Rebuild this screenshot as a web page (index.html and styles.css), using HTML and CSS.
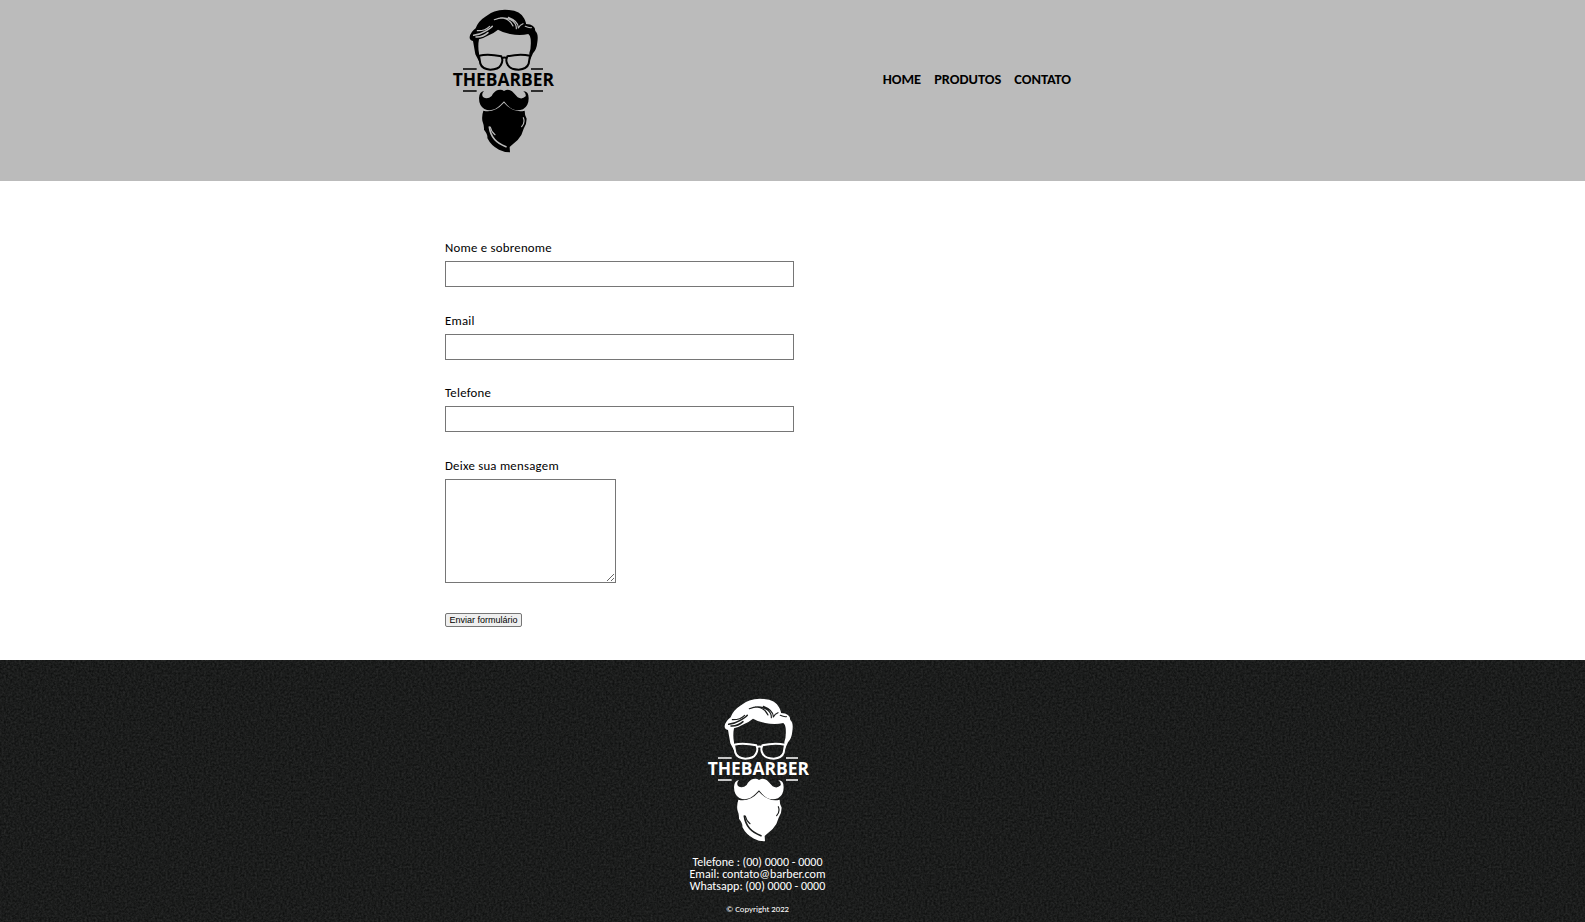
FILE: index.html
```html
<!DOCTYPE html>
<html lang="pt-br">
<head>
<meta charset="UTF-8">
<title>Contato - The Barber</title>
<link rel="stylesheet" href="styles.css">
</head>
<body>
<header class="header">
  <div class="container header-row">
    <h1 class="brand">
      <svg class="logo" viewBox="0 0 375 480" role="img" aria-label="The Barber">
        <g id="logo">
          <path fill="currentColor" d="M106 160L99 120Q88 118 89 108Q91 94 107 82Q115 60 138 46Q164 23 207 27Q241 29 253 53Q259 67 258 69Q286 70 286 90Q296 98 292 124Q290 146 279 157L269 179L268 156Q274 142 272 114Q271 103 265 99Q240 105 210 99Q189 95 174 86Q160 98 143 104Q127 113 117 115Q113 135 117 157L117 181Z"/>
          <g class="cut" fill="none" stroke-linecap="round">
            <path stroke-width="4.5" d="M101 103Q119 101 134 92Q151 83 157 76M108 108Q129 109 144 95"/>
            <path stroke-width="3.5" d="M112 89Q135 90 149 76M163 56Q194 43 218 60Q230 70 229 83M181 51Q208 51 219 75M205 49Q236 61 235 81M236 80Q239 72 249 68M256 76Q266 81 274 80"/>
          </g>
          <g fill="none" stroke="currentColor" stroke-width="6">
            <path d="M117 164Q145 157 184 166Q191 180 182 193Q175 206 151 206Q126 204 121 188ZM270 164Q239 157 202 166Q195 180 204 193Q212 206 236 206Q261 204 266 188Z"/>
            <path d="M185 172Q193 167 202 172"/>
            <path stroke-width="4" d="M69 204H110M273 204H309M69 270H110M273 270H309"/>
          </g>
          <text class="logo-text" x="38" y="256" textLength="304" lengthAdjust="spacingAndGlyphs" fill="currentColor">THEBARBER</text>
          <path fill="currentColor" d="M192 270Q205 262 216 271Q225 280 233 289Q246 297 257 286Q259 276 250 271Q266 270 266 292Q266 315 249 325Q221 335 201 311L192 301L181 312Q158 335 133 324Q117 314 117 291Q118 272 132 270Q123 279 129 288Q142 297 155 285Q162 271 174 267Q185 264 192 270Z"/>
          <path fill="currentColor" d="M130 329Q162 338 192 305Q220 337 254 329Q254 345 260 353Q260 370 251 383Q247 401 233 417Q219 429 209 438L210 454Q193 454 177 446Q153 434 142 411Q144 401 132 386Q133 375 127 359Q125 344 130 329Z"/>
          <g class="cut" fill="none" stroke-linecap="round">
            <path stroke-width="5" d="M148 378Q153 421 198 437"/>
            <path stroke-width="3.5" d="M151 378Q154 393 165 401M250 350Q256 364 245 377"/>
          </g>
        </g>
      </svg>
    </h1>
    <nav><ul class="nav">
      <li><a href="#">HOME</a></li>
      <li><a href="#">PRODUTOS</a></li>
      <li><a href="#">CONTATO</a></li>
    </ul></nav>
  </div>
</header>
<main class="container">
  <form class="form">
    <label class="label" for="nome">Nome e sobrenome</label>
    <input class="field" type="text" id="nome">
    <label class="label" for="email">Email</label>
    <input class="field" type="text" id="email">
    <label class="label label-phone" for="telefone">Telefone</label>
    <input class="field" type="text" id="telefone">
    <label class="label" for="mensagem">Deixe sua mensagem</label>
    <textarea class="message" id="mensagem"></textarea>
    <button class="send" type="button">Enviar formulário</button>
  </form>
</main>
<footer class="footer">
  <svg class="texture" aria-hidden="true">
    <filter id="grain" x="0" y="0" width="100%" height="100%" color-interpolation-filters="sRGB">
      <feTurbulence type="fractalNoise" baseFrequency="0.47" numOctaves="2" seed="4"/>
      <feColorMatrix values="0.15 0 0 0 0.032  0.15 0 0 0 0.037  0.15 0 0 0 0.035  0 0 0 0 1"/>
    </filter>
    <rect width="100%" height="100%" filter="url(#grain)"/>
  </svg>
  <div class="footer-content">
    <svg class="logo" viewBox="0 0 375 480" role="img" aria-label="The Barber"><use href="#logo"/></svg>
    <ul class="contacts">
      <li>Telefone : (00) 0000 - 0000</li>
      <li>Email: contato@barber.com</li>
      <li>Whatsapp: (00) 0000 - 0000</li>
    </ul>
    <p class="copyright">© Copyright 2022</p>
  </div>
</footer>
</body>
</html>
```
FILE: styles.css
```css
* { margin: 0; padding: 0; box-sizing: border-box; }
body { font-family: Calibri, Carlito, Lato, sans-serif; background: #fff; color: #000; height: 922px; overflow: hidden; display: flex; flex-direction: column; }
ul { list-style: none; }
.container { width: 705px; margin: 0 auto; }
.header { --cut: #bbb; background: #bbb; height: 181px; flex: none; }
.header-row { display: flex; justify-content: space-between; align-items: flex-start; padding-right: 74px; }
.brand { height: 161px; padding-top: 1px; line-height: 0; }
.logo { width: 125px; height: 160px; display: block; }
.logo-text { font: 700 53px "Open Sans", sans-serif; }
.cut { stroke: var(--cut); }
.nav { display: flex; gap: 13px; padding-top: 71px; }
.nav a { display: block; color: #000; text-decoration: none; font-size: 14.4px; line-height: 17px; font-weight: 700; }
.form { padding: 58px 0 0 5px; height: 479px; display: flex; flex-direction: column; align-items: flex-start; }
.label { font-size: 12.8px; line-height: 18px; height: 22px; letter-spacing: 0.25px; }
.field { width: 349px; height: 26px; border: 1px solid #767676; margin-bottom: 25px; }
.label-phone { margin-top: -1px; }
.message { width: 171px; height: 104px; border: 1px solid #767676; margin-bottom: 30px; resize: both; }
.send { width: 77px; height: 14px; border: 1px solid #767676; border-radius: 2px; background: #efefef; color: #000; font: 9px/12px "Liberation Sans", Arial, sans-serif; white-space: nowrap; }
.footer { --cut: #1b1d1c; position: relative; background: #1b1d1c; color: #fff; flex: 1; }
.texture { position: absolute; inset: 0; width: 100%; height: 100%; }
.footer-content { position: relative; width: 1515px; padding-top: 30px; display: flex; flex-direction: column; align-items: center; }
.contacts { padding-top: 6px; text-align: center; font-size: 12px; line-height: 12px; white-space: nowrap; }
.copyright { margin-top: 11px; font-size: 8.7px; line-height: 12px; }
```
